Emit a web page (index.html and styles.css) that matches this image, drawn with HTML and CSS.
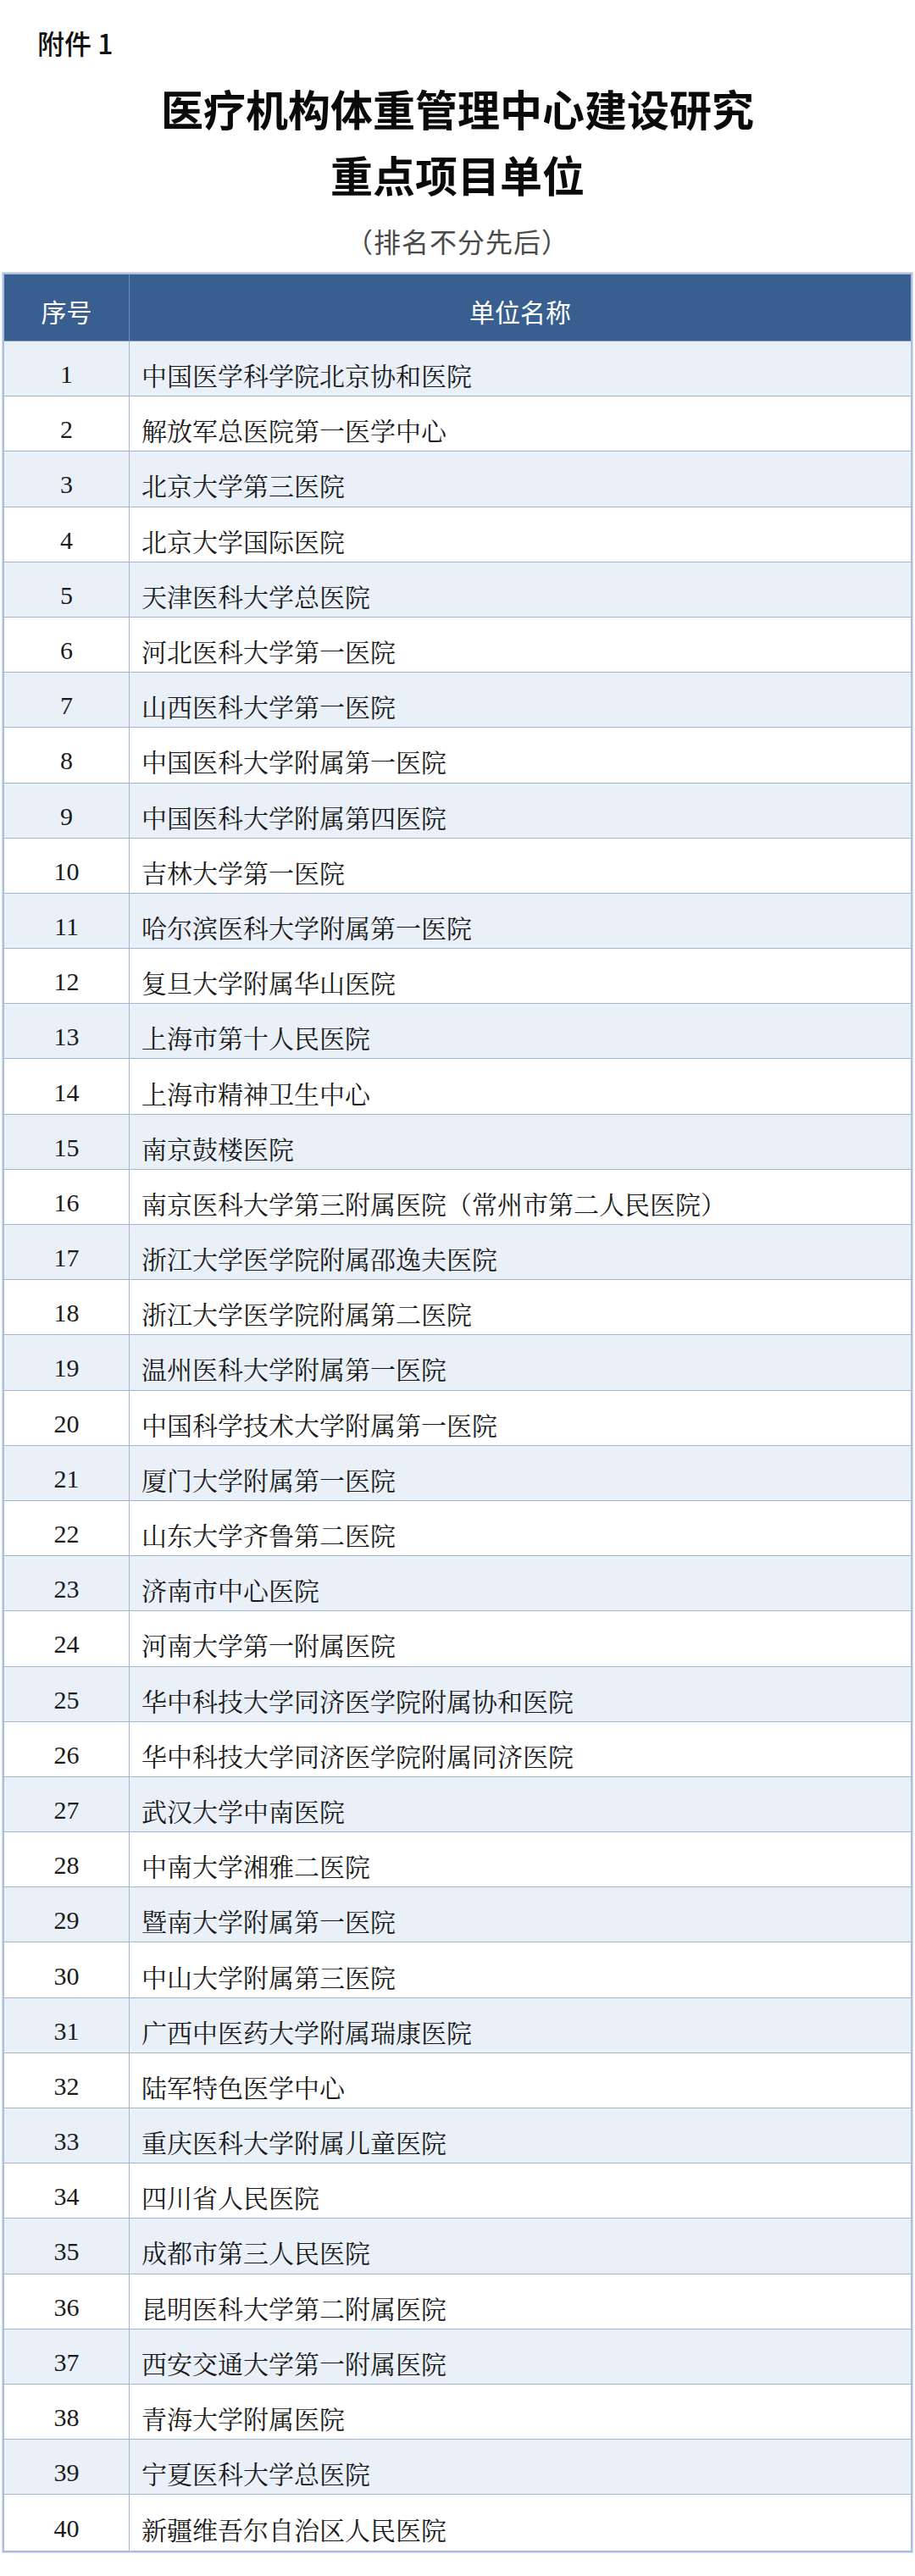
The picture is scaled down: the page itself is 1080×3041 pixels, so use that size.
FILE: index.html
```html
<!DOCTYPE html>
<html lang="zh-CN">
<head>
<meta charset="utf-8">
<title>医疗机构体重管理中心建设研究重点项目单位</title>
<link rel="stylesheet" href="styles.css">
</head>
<body>
<div class="page">
  <div class="attach">附件 1</div>
  <h1 class="title">医疗机构体重管理中心建设研究<br>重点项目单位</h1>
  <div class="subtitle">（排名不分先后）</div>
  <div class="table">
    <div class="row head"><div class="c1">序号</div><div class="c2">单位名称</div></div>
    <div class="row odd"><div class="c1">1</div><div class="c2">中国医学科学院北京协和医院</div></div>
    <div class="row"><div class="c1">2</div><div class="c2">解放军总医院第一医学中心</div></div>
    <div class="row odd"><div class="c1">3</div><div class="c2">北京大学第三医院</div></div>
    <div class="row"><div class="c1">4</div><div class="c2">北京大学国际医院</div></div>
    <div class="row odd"><div class="c1">5</div><div class="c2">天津医科大学总医院</div></div>
    <div class="row"><div class="c1">6</div><div class="c2">河北医科大学第一医院</div></div>
    <div class="row odd"><div class="c1">7</div><div class="c2">山西医科大学第一医院</div></div>
    <div class="row"><div class="c1">8</div><div class="c2">中国医科大学附属第一医院</div></div>
    <div class="row odd"><div class="c1">9</div><div class="c2">中国医科大学附属第四医院</div></div>
    <div class="row"><div class="c1">10</div><div class="c2">吉林大学第一医院</div></div>
    <div class="row odd"><div class="c1">11</div><div class="c2">哈尔滨医科大学附属第一医院</div></div>
    <div class="row"><div class="c1">12</div><div class="c2">复旦大学附属华山医院</div></div>
    <div class="row odd"><div class="c1">13</div><div class="c2">上海市第十人民医院</div></div>
    <div class="row"><div class="c1">14</div><div class="c2">上海市精神卫生中心</div></div>
    <div class="row odd"><div class="c1">15</div><div class="c2">南京鼓楼医院</div></div>
    <div class="row"><div class="c1">16</div><div class="c2">南京医科大学第三附属医院（常州市第二人民医院）</div></div>
    <div class="row odd"><div class="c1">17</div><div class="c2">浙江大学医学院附属邵逸夫医院</div></div>
    <div class="row"><div class="c1">18</div><div class="c2">浙江大学医学院附属第二医院</div></div>
    <div class="row odd"><div class="c1">19</div><div class="c2">温州医科大学附属第一医院</div></div>
    <div class="row"><div class="c1">20</div><div class="c2">中国科学技术大学附属第一医院</div></div>
    <div class="row odd"><div class="c1">21</div><div class="c2">厦门大学附属第一医院</div></div>
    <div class="row"><div class="c1">22</div><div class="c2">山东大学齐鲁第二医院</div></div>
    <div class="row odd"><div class="c1">23</div><div class="c2">济南市中心医院</div></div>
    <div class="row"><div class="c1">24</div><div class="c2">河南大学第一附属医院</div></div>
    <div class="row odd"><div class="c1">25</div><div class="c2">华中科技大学同济医学院附属协和医院</div></div>
    <div class="row"><div class="c1">26</div><div class="c2">华中科技大学同济医学院附属同济医院</div></div>
    <div class="row odd"><div class="c1">27</div><div class="c2">武汉大学中南医院</div></div>
    <div class="row"><div class="c1">28</div><div class="c2">中南大学湘雅二医院</div></div>
    <div class="row odd"><div class="c1">29</div><div class="c2">暨南大学附属第一医院</div></div>
    <div class="row"><div class="c1">30</div><div class="c2">中山大学附属第三医院</div></div>
    <div class="row odd"><div class="c1">31</div><div class="c2">广西中医药大学附属瑞康医院</div></div>
    <div class="row"><div class="c1">32</div><div class="c2">陆军特色医学中心</div></div>
    <div class="row odd"><div class="c1">33</div><div class="c2">重庆医科大学附属儿童医院</div></div>
    <div class="row"><div class="c1">34</div><div class="c2">四川省人民医院</div></div>
    <div class="row odd"><div class="c1">35</div><div class="c2">成都市第三人民医院</div></div>
    <div class="row"><div class="c1">36</div><div class="c2">昆明医科大学第二附属医院</div></div>
    <div class="row odd"><div class="c1">37</div><div class="c2">西安交通大学第一附属医院</div></div>
    <div class="row"><div class="c1">38</div><div class="c2">青海大学附属医院</div></div>
    <div class="row odd"><div class="c1">39</div><div class="c2">宁夏医科大学总医院</div></div>
    <div class="row last"><div class="c1">40</div><div class="c2">新疆维吾尔自治区人民医院</div></div>
  </div>
</div>
</body>
</html>
```

FILE: styles.css
```css
* { box-sizing: border-box; }
html, body { margin: 0; padding: 0; background: #ffffff; }
.page {
  width: 1080px;
  padding: 32px 3px 28px 3px;
  font-family: "Noto Sans CJK SC", sans-serif;
  color: #111;
}
.attach {
  margin-left: 41px;
  font-size: 32px;
  line-height: 36px;
  font-weight: 500;
  color: #111;
}
.title {
  margin: 20px 0 0 0;
  text-align: center;
  font-size: 50px;
  line-height: 78px;
  font-weight: 700;
  color: #0a0a0a;
}
.subtitle {
  margin-top: 20px;
  text-align: center;
  font-size: 32px;
  line-height: 40px;
  letter-spacing: 1px;
  color: #4a4a4a;
}
.table {
  margin-top: 18px;
  width: 1074px;
  border: 2px solid #a9bfdb;
  box-shadow: 0 0 0 1px #d4e0ee;
}
.row {
  display: grid;
  grid-template-columns: 148px 1fr;
  height: 65.2px;
  border-bottom: 1px solid #9fb7d5;
  background: #ffffff;
}
.row.odd { background: #e9f0f8; }
.row.last { border-bottom: none; }
.row.head {
  height: 79px;
  background: #385f8f;
  color: #ffffff;
  border-bottom: 1px solid #6d8fb8;
}
.c1, .c2 {
  display: flex;
  align-items: center;
  font-size: 30px;
  padding-top: 14px;
}
.c1 {
  justify-content: center;
  border-right: 1px solid #9fb7d5;
  font-family: "Liberation Serif", "Noto Serif CJK SC", "Noto Sans CJK SC", serif;
  color: #1a1a1a;
}
.c2 {
  padding-left: 14px;
  font-family: "Noto Serif CJK SC", "Noto Sans CJK SC", serif;
  color: #1a1a1a;
  letter-spacing: 0;
}
.head .c1, .head .c2 {
  color: #ffffff;
  font-family: "Noto Sans CJK SC", sans-serif;
  padding-top: 8px;
}
.head .c1 { border-right-color: #6d8fb8; }
.head .c2 { justify-content: center; padding-left: 0; }
```
